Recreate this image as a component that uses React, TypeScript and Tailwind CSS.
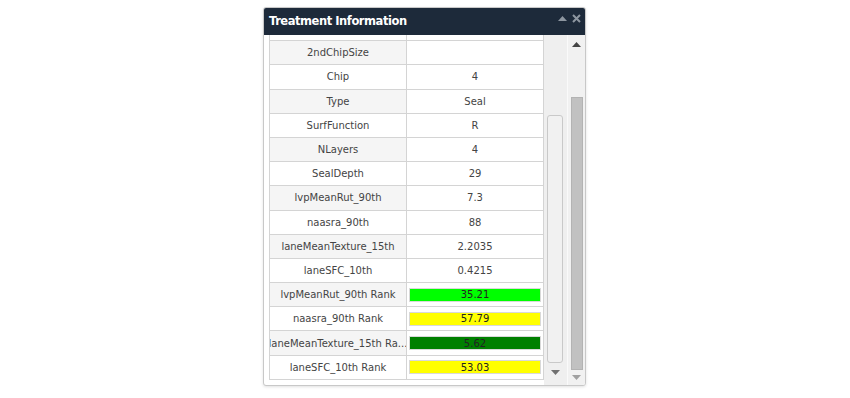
import React from "react";

type Row = { label: string; value?: string; rank?: string };

const rows: Row[] = [
  { label: "", value: "" },
  { label: "2ndChipSize", value: "" },
  { label: "Chip", value: "4" },
  { label: "Type", value: "Seal" },
  { label: "SurfFunction", value: "R" },
  { label: "NLayers", value: "4" },
  { label: "SealDepth", value: "29" },
  { label: "lvpMeanRut_90th", value: "7.3" },
  { label: "naasra_90th", value: "88" },
  { label: "laneMeanTexture_15th", value: "2.2035" },
  { label: "laneSFC_10th", value: "0.4215" },
  { label: "lvpMeanRut_90th Rank", value: "35.21", rank: "bg-[#00ff00]" },
  { label: "naasra_90th Rank", value: "57.79", rank: "bg-[#ffff00]" },
  { label: "laneMeanTexture_15th Ra...", value: "5.62", rank: "bg-[#008000]" },
  { label: "laneSFC_10th Rank", value: "53.03", rank: "bg-[#ffff00]" },
];

const Arrow = ({ up, className }: { up?: boolean; className?: string }) => (
  <svg width="9" height="5" viewBox="0 0 9 5" className={className}>
    <path d={up ? "M0 5 L4.5 0 L9 5 Z" : "M0 0 L4.5 5 L9 0 Z"} fill="currentColor" />
  </svg>
);

const App: React.FC = () => {
  return (
    <div className="w-[850px] h-[398px] bg-white pt-[7px] font-['DejaVu_Sans',Verdana,sans-serif]">
      <div className="ml-[263px] w-[323px] h-[379px] border border-[#c8c8c8] rounded-[3px] bg-white shadow-[0_1px_3px_rgba(0,0,0,0.12)] flex flex-col overflow-hidden">
        {/* header */}
        <div className="h-[27px] shrink-0 bg-[#1d2a3a] flex items-center justify-between pl-[5px] pr-[4px]">
          <span className="text-white font-bold text-[11.5px] tracking-[-0.45px]">Treatment Information</span>
          <div className="flex items-center gap-[5px] text-[#8d96a0] -mt-[6px]">
            <Arrow up className="w-[9px] h-[5px]" />
            <svg width="9" height="9" viewBox="0 0 9 9">
              <path d="M1 1 L8 8 M8 1 L1 8" stroke="currentColor" strokeWidth="2" />
            </svg>
          </div>
        </div>

        {/* body */}
        <div className="flex flex-1 min-h-0">
          <div className="flex-1 pl-[5px] overflow-hidden">
            <div className="-mt-[18px]">
              {rows.map((r, i) => (
                <div
                  key={i}
                  className="grid grid-cols-[138px_1fr] h-[24.2px] border-b border-[#d4d4d4] text-[10px] text-[#444]"
                >
                  <div
                    className={`border-l border-r border-[#d4d4d4] flex items-center justify-center whitespace-nowrap overflow-hidden ${
                      i % 2 === 1 ? "bg-[#f5f5f5]" : "bg-white"
                    }`}
                  >
                    {r.label}
                  </div>
                  <div className="border-r border-[#d4d4d4] flex items-center justify-center px-[2px]">
                    {r.rank ? (
                      <div
                        className={`${r.rank} w-full h-[14px] border border-[#d9d9d9] flex items-center justify-center text-[#222]`}
                      >
                        {r.value}
                      </div>
                    ) : (
                      r.value
                    )}
                  </div>
                </div>
              ))}
            </div>
          </div>

          {/* inner scrollbar */}
          <div className="w-[23px] bg-[#efefef] flex flex-col items-center pt-[80px]">
            <div className="w-[16px] h-[248px] ml-[-1px] rounded-[3px] border border-[#c9c9c9] bg-[#f1f1f1]" />
            <Arrow className="text-[#707070] mt-[7px]" />
          </div>

          {/* outer scrollbar */}
          <div className="w-[18px] bg-[#f1f1f1] border-l border-[#fafafa] flex flex-col items-center pt-[7px]">
            <Arrow up className="text-[#444]" />
            <div className="w-[12px] h-[273px] mt-[50px] bg-[#c1c1c1] border border-[#b3b3b3]" />
            <Arrow className="text-[#a0a0a0] mt-[5px]" />
          </div>
        </div>
      </div>
    </div>
  );
};

export default App;
